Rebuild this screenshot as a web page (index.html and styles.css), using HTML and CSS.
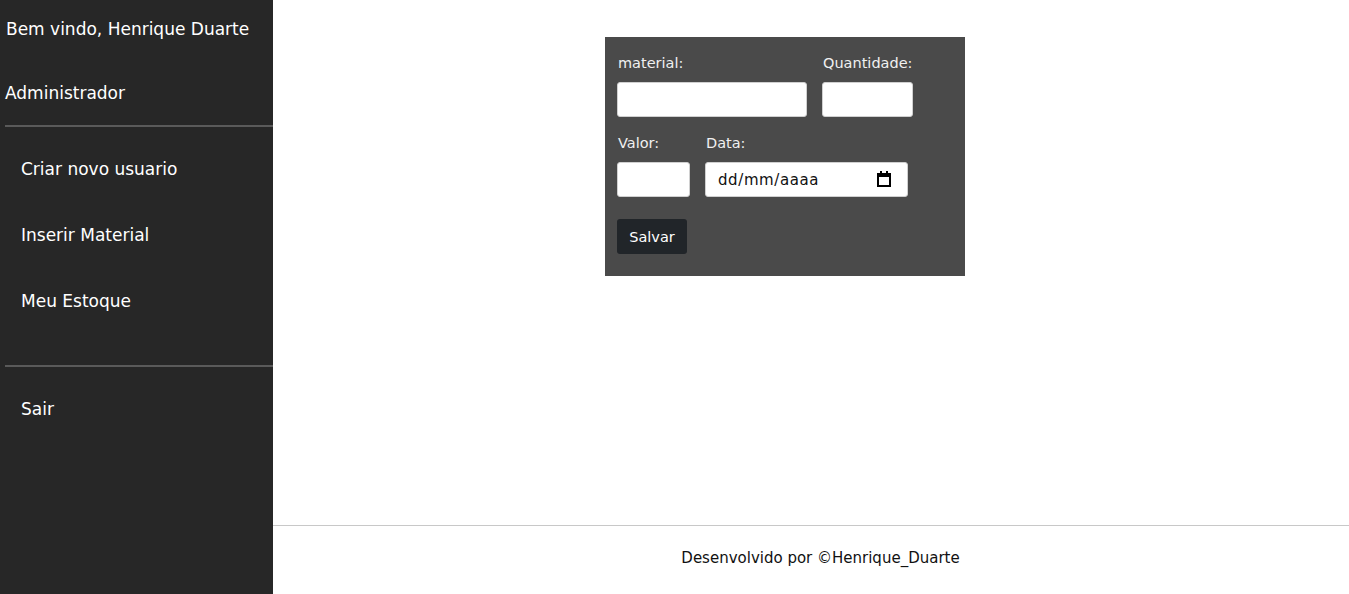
FILE: index.html
```html
<!DOCTYPE html>
<html lang="pt-BR">
<head>
<meta charset="utf-8">
<title>Inserir Material</title>
<link rel="stylesheet" href="styles.css">
</head>
<body>
<div class="layout">
  <aside class="sidebar">
    <div class="welcome">Bem vindo, Henrique Duarte</div>
    <div class="role">Administrador</div>
    <hr class="divider">
    <nav class="menu">
      <a class="menu-item" href="#">Criar novo usuario</a>
      <a class="menu-item" href="#">Inserir Material</a>
      <a class="menu-item" href="#">Meu Estoque</a>
    </nav>
    <hr class="divider divider-bottom">
    <a class="menu-item exit" href="#">Sair</a>
  </aside>
  <main class="main">
    <div class="content">
      <form class="card">
        <div class="row">
          <div class="field">
            <label class="label">material:</label>
            <input class="input input-material" type="text">
          </div>
          <div class="field">
            <label class="label">Quantidade:</label>
            <input class="input input-qty" type="text">
          </div>
        </div>
        <div class="row">
          <div class="field">
            <label class="label">Valor:</label>
            <input class="input input-valor" type="text">
          </div>
          <div class="field">
            <label class="label">Data:</label>
            <div class="date-wrap">
              <input class="input input-date" type="text" placeholder="dd/mm/aaaa">
              <svg class="cal-icon" width="14" height="16" viewBox="0 0 14 16">
                <rect x="1" y="3" width="12" height="12" fill="none" stroke="#000" stroke-width="2"/>
                <rect x="1" y="3" width="12" height="3" fill="#000"/>
                <rect x="3" y="0" width="2" height="4" fill="#000"/>
                <rect x="9" y="0" width="2" height="4" fill="#000"/>
              </svg>
            </div>
          </div>
        </div>
        <button class="btn" type="button">Salvar</button>
      </form>
    </div>
    <footer class="footer">Desenvolvido por ©Henrique_Duarte</footer>
  </main>
</div>
</body>
</html>
```
FILE: styles.css
```css
* { box-sizing: border-box; }
html, body { margin: 0; padding: 0; height: 100%; }
body {
  font-family: "DejaVu Sans", Verdana, sans-serif;
  background: #fff;
}
.layout {
  display: flex;
  height: 100vh;
}
.sidebar {
  width: 273px;
  flex: none;
  background: #272727;
  color: #fff;
  display: flex;
  flex-direction: column;
  padding-left: 5px;
}
.welcome {
  font-size: 17px;
  padding: 19px 0 0 1px;
  height: 60px;
}
.role {
  font-size: 17px;
  height: 65px;
  padding-top: 23px;
}
.divider {
  border: 0;
  height: 2px;
  background: #5a5a5a;
  margin: 0;
}
.menu {
  display: flex;
  flex-direction: column;
  padding-top: 32px;
  height: 238px;
}
.menu-item {
  color: #fff;
  text-decoration: none;
  font-size: 17px;
  padding-left: 16px;
  height: 66px;
}
.exit {
  padding-top: 32px;
}
.main {
  flex: 1;
  display: flex;
  flex-direction: column;
}
.content {
  flex: 1;
  padding: 37px 0 0 332px;
}
.card {
  width: 360px;
  background: #4a4a4a;
  padding: 18px 12px 22px 12px;
  display: flex;
  flex-direction: column;
}
.row {
  display: flex;
  gap: 15px;
  margin-bottom: 18px;
}
.field {
  display: flex;
  flex-direction: column;
}
.label {
  color: #f0f0f0;
  font-size: 14.5px;
  height: 27px;
  padding-left: 1px;
}
.input {
  height: 35px;
  border: 1px solid #d0d0d0;
  border-radius: 3px;
  background: #fff;
  font-family: inherit;
  font-size: 15px;
  padding: 0 12px;
}
.input-material { width: 190px; }
.input-qty { width: 91px; }
.input-valor { width: 73px; }
.date-wrap {
  position: relative;
  width: 203px;
}
.input-date {
  width: 203px;
  letter-spacing: 0.6px;
}
.input-date::placeholder { color: #111; }
.cal-icon {
  position: absolute;
  right: 17px;
  top: 9px;
}
.btn {
  align-self: flex-start;
  background: #212529;
  color: #fff;
  border: 0;
  border-radius: 3px;
  height: 35px;
  width: 70px;
  font-family: inherit;
  font-size: 14.5px;
  margin-top: 4px;
}
.footer {
  height: 69px;
  border-top: 1px solid #c8c8c8;
  text-align: center;
  font-size: 15px;
  color: #111;
  padding: 23px 0 0 19px;
}
```
